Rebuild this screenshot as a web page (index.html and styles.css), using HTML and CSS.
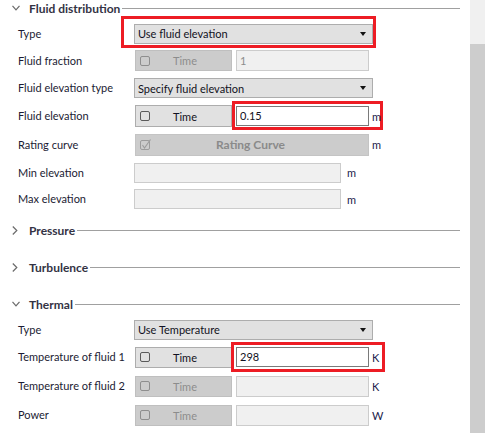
FILE: index.html
```html
<!DOCTYPE html>
<html>
<head>
<meta charset="utf-8">
<link rel="stylesheet" href="styles.css">
</head>
<body>
<div class="window">
  <div class="panel">
    <div class="section-head">
      <svg class="chev" width="8" height="6" viewBox="0 0 8 6"><path d="M0.5 0.8 L4 4.8 L7.5 0.8" fill="none" stroke="#6a6a6a" stroke-width="1.2"/></svg>
      <span class="section-title">Fluid distribution</span>
      <span class="section-line"></span>
    </div>
    <div class="fields fields-fluid">
      <div class="label">Type</div>
      <div class="ctrl">
        <div class="mark">
          <div class="combo"><span>Use fluid elevation</span><i class="arrow"></i></div>
          <div class="red red-type"></div>
        </div>
      </div>

      <div class="label">Fluid fraction</div>
      <div class="ctrl">
        <div class="tbtn off"><span class="cb"></span><span class="tbtn-text">Time</span></div>
        <div class="field off">1</div>
      </div>

      <div class="label">Fluid elevation type</div>
      <div class="ctrl">
        <div class="combo"><span>Specify fluid elevation</span><i class="arrow"></i></div>
      </div>

      <div class="label">Fluid elevation</div>
      <div class="ctrl">
        <div class="tbtn tall"><span class="cb"></span><span class="tbtn-text">Time</span></div>
        <div class="mark">
          <div class="field edit">0.15</div>
          <div class="red red-elev"></div>
        </div>
        <span class="unit">m</span>
      </div>

      <div class="label">Rating curve</div>
      <div class="ctrl">
        <div class="rbtn">
          <svg class="rcheck" width="12" height="12" viewBox="0 0 12 12"><rect x="0.5" y="1.5" width="9" height="9" rx="1.5" fill="none" stroke="#9c9c9c"/><path d="M2.5 6 L4.5 9 L10.5 0.5" fill="none" stroke="#9c9c9c" stroke-width="1.1"/></svg>
          <span class="rbtn-text">Rating Curve</span>
        </div>
        <span class="unit">m</span>
      </div>

      <div class="label">Min elevation</div>
      <div class="ctrl">
        <div class="field off wide"></div>
        <span class="unit unit-far">m</span>
      </div>

      <div class="label">Max elevation</div>
      <div class="ctrl">
        <div class="field off wide"></div>
        <span class="unit unit-far">m</span>
      </div>
    </div>

    <div class="section-head collapsed first-collapsed">
      <svg class="chev" width="6" height="9" viewBox="0 0 6 9"><path d="M0.8 0.5 L4.8 4.5 L0.8 8.5" fill="none" stroke="#6a6a6a" stroke-width="1.2"/></svg>
      <span class="section-title">Pressure</span>
      <span class="section-line"></span>
    </div>
    <div class="section-head collapsed">
      <svg class="chev" width="6" height="9" viewBox="0 0 6 9"><path d="M0.8 0.5 L4.8 4.5 L0.8 8.5" fill="none" stroke="#6a6a6a" stroke-width="1.2"/></svg>
      <span class="section-title">Turbulence</span>
      <span class="section-line"></span>
    </div>
    <div class="section-head collapsed">
      <svg class="chev" width="8" height="6" viewBox="0 0 8 6"><path d="M0.5 0.8 L4 4.8 L7.5 0.8" fill="none" stroke="#6a6a6a" stroke-width="1.2"/></svg>
      <span class="section-title">Thermal</span>
      <span class="section-line"></span>
    </div>

    <div class="fields fields-thermal">
      <div class="label">Type</div>
      <div class="ctrl">
        <div class="combo"><span>Use Temperature</span><i class="arrow"></i></div>
      </div>

      <div class="label">Temperature of fluid 1</div>
      <div class="ctrl">
        <div class="tbtn"><span class="cb"></span><span class="tbtn-text">Time</span></div>
        <div class="mark">
          <div class="field edit">298</div>
          <div class="red red-temp"></div>
        </div>
        <span class="unit">K</span>
      </div>

      <div class="label">Temperature of fluid 2</div>
      <div class="ctrl">
        <div class="tbtn off"><span class="cb"></span><span class="tbtn-text">Time</span></div>
        <div class="field off"></div>
        <span class="unit">K</span>
      </div>

      <div class="label">Power</div>
      <div class="ctrl">
        <div class="tbtn off"><span class="cb"></span><span class="tbtn-text">Time</span></div>
        <div class="field off"></div>
        <span class="unit">W</span>
      </div>
    </div>
  </div>
  <div class="scrollbar"><div class="thumb"></div></div>
</div>
</body>
</html>
```

FILE: styles.css
```css
* { box-sizing: border-box; }
html, body { margin: 0; padding: 0; background: #ffffff; }
body {
  font-family: Lato, "Noto Sans", sans-serif;
  font-size: 11px;
  color: #1b1b33;
}
.window {
  width: 485px;
  height: 433px;
  display: flex;
  overflow: hidden;
}
.panel {
  width: 470px;
  flex: none;
}
.scrollbar {
  width: 15px;
  height: 433px;
  background: #f0f0f0;
  padding-top: 44px;
}
.thumb {
  height: 100%;
  background: #cdcdcd;
}

/* section headers */
.section-head {
  height: 16px;
  display: flex;
  align-items: center;
  padding-left: 12px;
  width: 460px;
}
.section-head .chev { flex: none; }
.section-title {
  font-weight: bold;
  font-size: 12px;
  color: #333344;
  margin-left: 9px;
  white-space: nowrap;
}
.section-head svg[width="6"] + .section-title { margin-left: 11px; }
.section-line {
  flex: 1;
  height: 1px;
  background: #a0a0a0;
  margin-left: 2px;
}
.first-collapsed { margin-top: 10px; }
.section-head.collapsed + .section-head { margin-top: 21px; }

/* field grids */
.fields {
  display: grid;
  grid-template-columns: 116px 1fr;
  padding-left: 18px;
  align-items: center;
}
.fields-fluid {
  margin-top: 4px;
  grid-template-rows: 27px 27px 28px 28px 29px 27px 26px;
}
.fields-thermal {
  margin-top: 4px;
  grid-template-rows: 27px 28px 30px 28px;
}
.label {
  white-space: nowrap;
  line-height: 14px;
  min-width: 0;
}
.ctrl {
  display: flex;
  align-items: center;
}
.mark { position: relative; }

/* combo */
.combo {
  width: 239px;
  height: 20px;
  background: #e1e1e1;
  border: 1px solid #adadad;
  display: flex;
  align-items: center;
  padding-left: 3px;
  padding-right: 6px;
  justify-content: space-between;
  color: #111122;
}
.arrow {
  width: 0;
  height: 0;
  border-left: 3.5px solid transparent;
  border-right: 3.5px solid transparent;
  border-top: 4px solid #111;
}

/* time toggle button */
.tbtn {
  width: 97px;
  height: 21px;
  margin-left: 1px;
  background: #e1e1e1;
  border: 1px solid #adadad;
  display: flex;
  align-items: center;
  padding-left: 4px;
  color: #111122;
  flex: none;
}
.tbtn.tall { height: 22px; }
.tbtn.off {
  background: #cccccc;
  border-color: #bfbfbf;
  color: #8c8c8c;
}
.cb {
  width: 10px;
  height: 10px;
  border: 1px solid #5a5a5a;
  border-radius: 2px;
  flex: none;
}
.tbtn.off .cb { border-color: #8e8e8e; }
.tbtn-text {
  margin-left: 23px;
}

/* text fields */
.field {
  width: 133px;
  height: 21px;
  margin-left: 4px;
  border: 1px solid #cccccc;
  background: #f0f0f0;
  padding-left: 3px;
  line-height: 19px;
  color: #8c8c8c;
  flex: none;
}
.field.edit {
  background: #ffffff;
  border-color: #7a7a7a;
  color: #111122;
  height: 20px;
  line-height: 18px;
}
.mark .field { margin-left: 0; }
.tbtn + .mark { margin-left: 4px; }
.field.wide {
  width: 207px;
  height: 20px;
  margin-left: 0;
}
.unit {
  margin-left: 3px;
  color: #1b1b4b;
  position: relative;
}
.unit-far { margin-left: 6px; }

/* rating curve */
.rbtn {
  width: 234px;
  height: 22px;
  margin-left: 1px;
  background: #cccccc;
  border: 1px solid #c4c4c4;
  display: flex;
  align-items: center;
  padding-left: 4px;
  flex: none;
}
.rcheck { flex: none; }
.rbtn-text {
  font-weight: bold;
  font-size: 12px;
  color: #8a8a8a;
  margin-left: 64px;
}

/* red highlight frames */
.red {
  position: absolute;
  border: 3px solid #ed1c24;
  pointer-events: none;
}
.red-type { left: -13px; top: -8px; width: 255px; height: 32px; }
.red-elev { left: -4px; top: -5px; width: 151px; height: 29px; }
.red-temp { left: -5px; top: -5px; width: 154px; height: 30px; }
```
